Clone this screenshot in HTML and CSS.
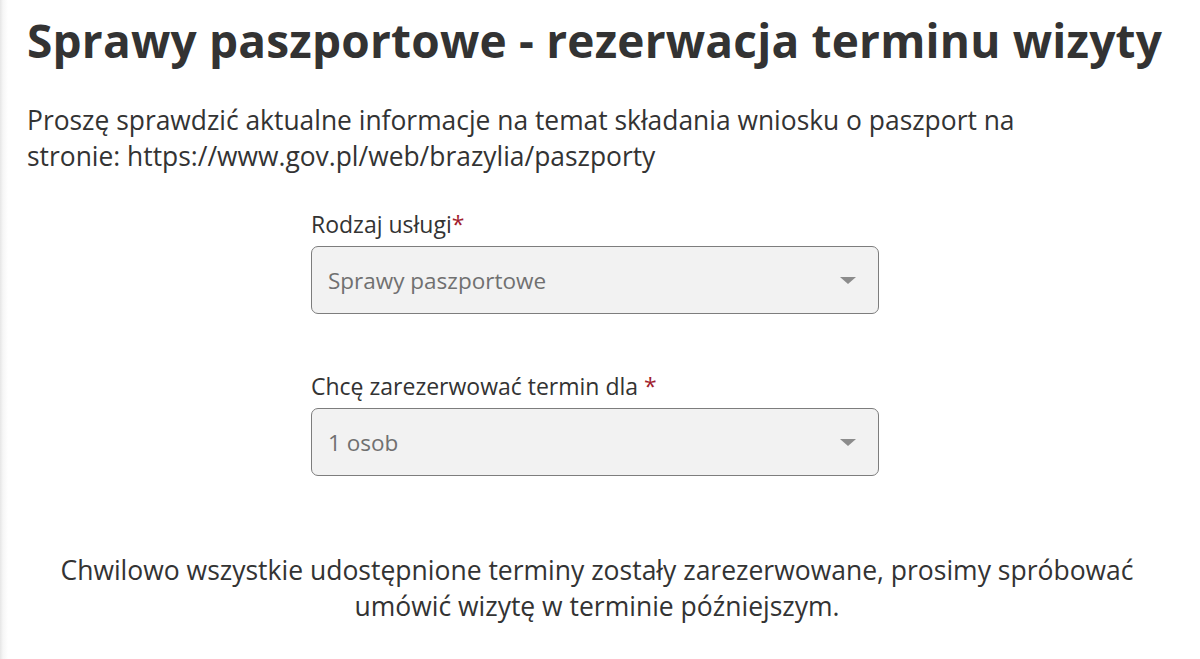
FILE: index.html
```
<!doctype html>
<html lang="pl">
  <head>
    <meta charset="utf-8">
    <title>Sprawy paszportowe - rezerwacja terminu wizyty</title>
    <link rel="stylesheet" href="styles.css">
  </head>
  <body>
    <div class="page">
      <h1>Sprawy paszportowe - rezerwacja terminu wizyty</h1>
      <p class="intro">Proszę sprawdzić aktualne informacje na temat składania wniosku o paszport na stronie: https://www.gov.pl/web/brazylia/paszporty</p>
      <div class="form">
        <div class="field">
          <label>Rodzaj usługi<span class="req">*</span></label>
          <div class="select">
            <span>Sprawy paszportowe</span>
            <span class="caret"></span>
          </div>
        </div>
        <div class="field">
          <label>Chcę zarezerwować termin dla <span class="req">*</span></label>
          <div class="select">
            <span>1 osob</span>
            <span class="caret"></span>
          </div>
        </div>
      </div>
      <p class="notice">Chwilowo wszystkie udostępnione terminy zostały zarezerwowane, prosimy spróbować umówić wizytę w terminie późniejszym.</p>
    </div>
  </body>
</html>
```
FILE: styles.css
```
body { margin: 0; font-family: "Open Sans", "Noto Sans", sans-serif; color: #333; background: #fff; }
.page { min-height: 659px; padding: 0 0 0 27px; width: 1200px; box-sizing: border-box;
  background: linear-gradient(to right, #e6e6e6 0, #f6f6f6 3px, #fff 8px); }
h1 { margin: 0; padding-top: 10px; font-size: 46px; font-weight: 700; line-height: 60px; letter-spacing: 0.2px; color: #333; white-space: nowrap; }
.intro { margin: 32px 0 0; font-size: 26.4px; line-height: 36px; width: 1020px; }
.form { width: 568px; margin: 34px 0 0 284px; }
.field + .field { margin-top: 56px; }
.field label { display: block; font-size: 23px; line-height: 32px; margin-bottom: 6px; }
.req { color: #a11d2e; }
.select { display: flex; align-items: center; justify-content: space-between; height: 68px; box-sizing: border-box;
  padding: 0 22px 0 16px; border: 1px solid #7d7d7d; border-radius: 7px; background: #f2f2f2;
  font-size: 22.5px; color: #707070; }
.caret { width: 0; height: 0; border-left: 8px solid transparent; border-right: 8px solid transparent; border-top: 7px solid #8c8c8c; }
.notice { width: 1100px; margin: 76px 0 0 20px; text-align: center; font-size: 26.5px; line-height: 36px; }
```
